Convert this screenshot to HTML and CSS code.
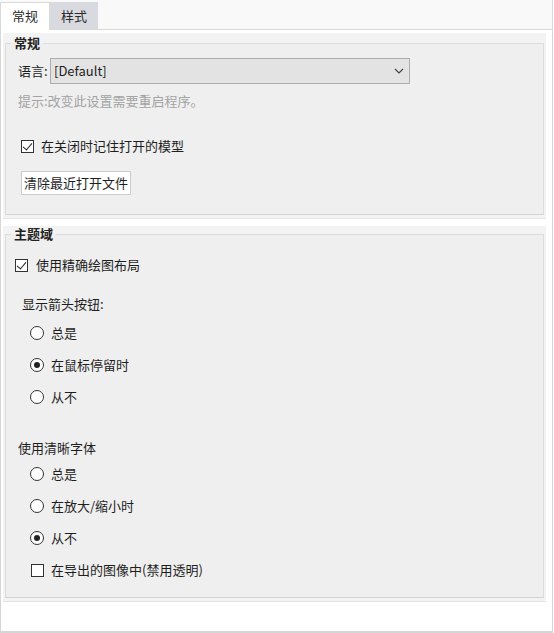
FILE: index.html
```html
<!DOCTYPE html>
<html lang="zh-CN">
<head>
    <meta charset="UTF-8">
    <title>选项</title>
    <link rel="stylesheet" href="styles.css">
</head>
<body>
    <div class="window">
        <div class="tabs">
            <div class="tab active">常规</div>
            <div class="tab">样式</div>
        </div>

        <div class="body">
            <div class="panel first">
                <fieldset class="group">
                    <legend>常规</legend>
                    <div class="lang">
                        <span class="lang-label">语言:</span>
                        <div class="combo">
                            <span>[Default]</span>
                            <svg width="10" height="6" viewBox="0 0 10 6"><path d="M1 1l4 4 4-4" fill="none" stroke="#444" stroke-width="1.2"/></svg>
                        </div>
                    </div>
                    <div class="hint">提示:改变此设置需要重启程序。</div>
                    <div class="opt check-remember"><span class="box checked"></span>在关闭时记住打开的模型</div>
                    <button class="btn">清除最近打开文件</button>
                </fieldset>
            </div>

            <div class="panel second">
                <fieldset class="group">
                    <legend>主题域</legend>
                    <div class="opt check-layout"><span class="box checked"></span>使用精确绘图布局</div>
                    <div class="caption arrows">显示箭头按钮:</div>
                    <div class="opt radio first-radio"><span class="dot"></span>总是</div>
                    <div class="opt radio"><span class="dot on"></span>在鼠标停留时</div>
                    <div class="opt radio"><span class="dot"></span>从不</div>
                    <div class="caption fonts">使用清晰字体</div>
                    <div class="opt radio font-radio"><span class="dot"></span>总是</div>
                    <div class="opt radio"><span class="dot"></span>在放大/缩小时</div>
                    <div class="opt radio"><span class="dot on"></span>从不</div>
                    <div class="opt radio check-export"><span class="box"></span>在导出的图像中(禁用透明)</div>
                </fieldset>
            </div>
        </div>
    </div>
</body>
</html>
```

FILE: styles.css
```css
body {
    margin: 0;
    background: #ffffff;
    font-family: "Noto Sans CJK SC", "Noto Sans", sans-serif;
    font-size: 13px;
    line-height: 16px;
    color: #1e1e1e;
}
.window {
    width: 553px;
    height: 633px;
    display: flex;
    flex-direction: column;
}
.tabs {
    height: 29px;
    display: flex;
    align-items: flex-end;
    background: #f9f9f9;
    border-bottom: 1px solid #d9d9d9;
    border-right: 1px solid #d9d9d9;
}
.tab {
    width: 48px;
    height: 27px;
    box-sizing: border-box;
    display: flex;
    align-items: center;
    justify-content: center;
    background: #d9dadf;
    color: #2a2a2a;
}
.tab.active {
    width: 50px;
    height: 28px;
    margin-bottom: -1px;
    padding-bottom: 2px;
    background: #ffffff;
    border: 1px solid #d9d9d9;
    border-bottom: none;
}
.body {
    flex: 1;
    padding: 3px 6px 0 2px;
    border-left: 1px solid #d6d6d6;
    border-right: 1px solid #d6d6d6;
    border-bottom: 2px solid #d6d6d6;
}
.panel {
    background: #f3f3f3;
    padding: 2px 2px 3px 2px;
    border-bottom: 1px solid #e4e4e4;
}
.panel.second {
    margin-top: 7px;
    padding-top: 0;
}
.group {
    margin: 0;
    padding: 0 0 19px 0;
    border: 1px solid #dcdcdc;
    border-bottom-color: #d3d3d3;
    background: #efefef;
    display: flex;
    flex-direction: column;
    align-items: flex-start;
}
.second .group {
    padding-bottom: 19px;
}
.group legend {
    margin-left: 5px;
    padding: 0 3px;
    font-weight: 700;
    color: #222;
}
.lang {
    display: flex;
    align-items: center;
    margin: 7px 0 0 12px;
}
.lang-label {
    width: 32px;
}
.combo {
    width: 360px;
    height: 26px;
    box-sizing: border-box;
    padding: 0 5px 0 3px;
    background: #e3e3e3;
    border: 1px solid #adadad;
    display: flex;
    align-items: center;
    justify-content: space-between;
}
.hint {
    margin: 9px 0 0 12px;
    color: #a3a3a3;
}
.opt {
    display: flex;
    align-items: center;
    height: 16px;
}
.box {
    width: 13px;
    height: 13px;
    box-sizing: border-box;
    border: 1px solid #333;
    background: #fff;
    margin-right: 7px;
    position: relative;
}
.box.checked::after {
    content: "";
    position: absolute;
    left: 3px;
    top: 0px;
    width: 4px;
    height: 8px;
    border: solid #222;
    border-width: 0 1.5px 1.5px 0;
    transform: rotate(40deg);
}
.check-remember {
    margin: 29px 0 0 15px;
}
.btn {
    margin: 17px 0 0 15px;
    width: 110px;
    height: 24px;
    padding: 0;
    background: #ffffff;
    border: 1px solid #cccccc;
    font: inherit;
    color: #1e1e1e;
}
.check-layout {
    margin: 15px 0 0 9px;
}
.check-layout .box {
    margin-right: 8px;
}
.caption {
    margin-top: 23px;
    margin-left: 16px;
}
.caption.fonts {
    margin-top: 35px;
    margin-left: 12px;
}
.radio {
    margin: 16px 0 0 24px;
}
.first-radio {
    margin-top: 13px;
}
.font-radio {
    margin-top: 10px;
}
.dot {
    width: 14px;
    height: 14px;
    box-sizing: border-box;
    border: 1px solid #333;
    border-radius: 50%;
    background: #fff;
    margin-right: 7px;
    display: flex;
    align-items: center;
    justify-content: center;
}
.dot.on::after {
    content: "";
    width: 6px;
    height: 6px;
    border-radius: 50%;
    background: #222;
}
.check-export {
    margin-left: 25px;
}
.check-export .box {
    margin-right: 7px;
}
```
